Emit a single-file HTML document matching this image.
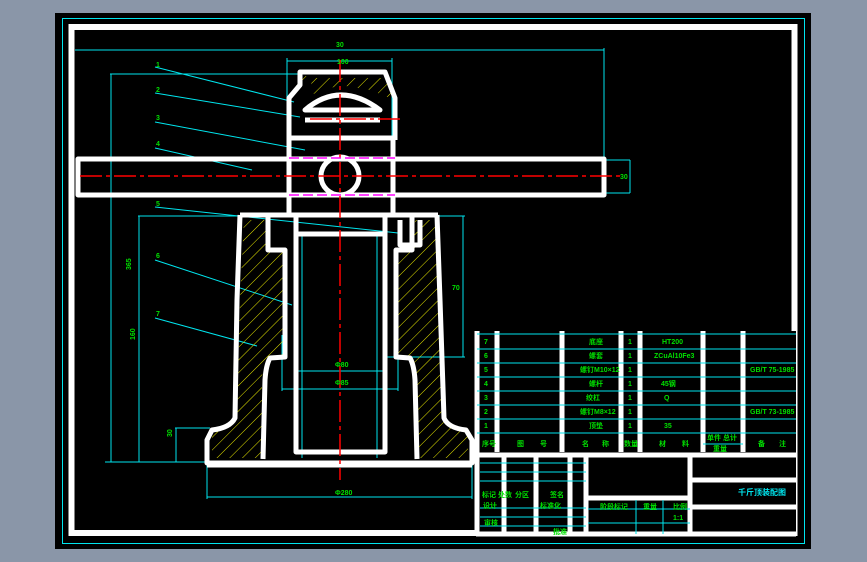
<!DOCTYPE html>
<html><head><meta charset="utf-8"><style>
html,body{margin:0;padding:0;background:#8a96a8;width:867px;height:562px;overflow:hidden}
svg{display:block}
text{font-family:"Liberation Sans","Noto Sans CJK SC",sans-serif;font-weight:bold}
</style></head><body>
<svg width="867" height="562" viewBox="0 0 867 562" xmlns="http://www.w3.org/2000/svg">
<defs>
<pattern id="h" width="9" height="9" patternUnits="userSpaceOnUse" patternTransform="rotate(45)">
<line x1="0" y1="0" x2="0" y2="9" stroke="#e8e800" stroke-width="1"/>
</pattern>
</defs>
<rect x="55" y="13" width="756" height="536" fill="#000"/>
<rect x="62.5" y="18.5" width="742" height="525" fill="none" stroke="#00e5ee" stroke-width="1"/>
<rect x="71.5" y="27" width="723" height="506" fill="none" stroke="#fff" stroke-width="6"/>

<!-- dimension lines -->
<g stroke="#00e5ee" stroke-width="1" fill="none">
<line x1="75" y1="50" x2="604" y2="50"/><line x1="604" y1="48" x2="604" y2="160"/>
<line x1="287" y1="61" x2="392" y2="61"/><line x1="287" y1="58" x2="287" y2="140"/><line x1="392" y1="58" x2="392" y2="140"/>
<line x1="110" y1="74" x2="300" y2="74"/><line x1="111" y1="74" x2="111" y2="462"/>
<line x1="105" y1="462" x2="205" y2="462"/>
<line x1="138" y1="216" x2="240" y2="216"/><line x1="139" y1="216" x2="139" y2="462"/>
<line x1="175" y1="428" x2="210" y2="428"/><line x1="176" y1="428" x2="176" y2="462"/>
<line x1="207" y1="465" x2="207" y2="499"/><line x1="472" y1="465" x2="472" y2="499"/><line x1="207" y1="497" x2="472" y2="497"/>
<line x1="340" y1="216" x2="465" y2="216"/><line x1="463" y1="216" x2="463" y2="357"/><line x1="384" y1="357" x2="465" y2="357"/>
<line x1="295" y1="371" x2="385" y2="371"/><line x1="282" y1="389" x2="398" y2="389"/>
<line x1="282" y1="335" x2="282" y2="391"/><line x1="398" y1="335" x2="398" y2="391"/>
<line x1="302" y1="233" x2="302" y2="458"/><line x1="377" y1="233" x2="377" y2="458"/>
<line x1="506" y1="160" x2="630" y2="160"/><line x1="506" y1="193" x2="630" y2="193"/><line x1="630" y1="160" x2="630" y2="193"/>
<line x1="155" y1="67" x2="294" y2="102"/>
<line x1="155" y1="93" x2="300" y2="117"/>
<line x1="155" y1="122" x2="305" y2="150"/>
<line x1="155" y1="148" x2="252" y2="170"/>
<line x1="155" y1="207" x2="398" y2="233"/>
<line x1="155" y1="260" x2="292" y2="305"/>
<line x1="155" y1="318" x2="257" y2="346"/>
</g>

<!-- hatching -->
<g fill="url(#h)">
<path d="M296 98 L312 80 L300 72 L296 80 Z"/>
<path d="M312 78 L388 78 L395 100 L370 90 L340 85 L310 95 Z"/>
<path d="M244 220 L268 220 L268 250 L287 250 L287 355 L270 360 L262 375 L262 458 L212 458 L212 432 L237 420 L240 300 Z"/>
<path d="M395 250 L412 250 L415 220 L437 220 L442 300 L445 420 L468 432 L468 458 L417 458 L415 375 L410 360 L395 355 Z"/>
</g>

<!-- white geometry -->
<g stroke="#fff" stroke-width="5" fill="none" stroke-linejoin="round">
<path d="M289 140 L289 98 L300 85 L300 72 L385 72 L390 85 L395 98 L395 140"/>
<path d="M305 110 Q340 80 380 110 Z" />
<line x1="305" y1="120" x2="380" y2="120"/>
<line x1="289" y1="138" x2="395" y2="138"/>
<rect x="78" y="159" width="526" height="36"/>
<line x1="289" y1="140" x2="289" y2="215"/><line x1="393" y1="140" x2="393" y2="215"/>
<circle cx="340" cy="176" r="19"/>
<line x1="240" y1="215" x2="438" y2="215"/>
<path d="M240 215 L237 300 L235 418 Q230 428 212 430 L207 440 L207 463 L472 463 L472 440 L466 430 Q448 428 444 418 L440 300 L437 215"/>
<path d="M268 215 L268 250 L285 250 L285 357 L270 358 Q266 365 265 380 L263 459"/>
<path d="M412 215 L412 250 L396 250 L396 357 L410 358 Q414 365 415 380 L417 459"/>
<rect x="296" y="234" width="89" height="218"/>
<line x1="296" y1="215" x2="296" y2="234"/><line x1="385" y1="215" x2="385" y2="234"/>
<path d="M400 220 L400 245 L420 245 L420 220"/>
</g>
<g stroke="#fff" stroke-width="3" fill="none">
<line x1="207" y1="466" x2="472" y2="466"/>
</g>

<!-- center lines -->
<g stroke="#f00" stroke-width="1.5" stroke-dasharray="22 4 4 4" fill="none">
<line x1="80" y1="176" x2="620" y2="176"/>
<line x1="340" y1="60" x2="340" y2="480"/>
<line x1="310" y1="119" x2="400" y2="119"/>
</g>
<g stroke="#f0f" stroke-width="1.5" stroke-dasharray="10 4" fill="none">
<line x1="289" y1="158" x2="395" y2="158"/><line x1="289" y1="195" x2="395" y2="195"/>
</g>

<!-- dim labels -->
<g fill="#00e000" font-size="7">
<text x="336" y="47">30</text><text x="337" y="64">100</text>
<text x="156" y="67">1</text><text x="156" y="92">2</text><text x="156" y="120">3</text><text x="156" y="146">4</text>
<text x="156" y="206">5</text><text x="156" y="258">6</text><text x="156" y="316">7</text>
<text x="620" y="179">30</text><text x="452" y="290">70</text>
<text x="335" y="367">Φ80</text><text x="335" y="385">Φ85</text><text x="335" y="495">Φ280</text>
<text x="131" y="270" transform="rotate(-90 131 270)">365</text>
<text x="135" y="340" transform="rotate(-90 135 340)">160</text>
<text x="172" y="437" transform="rotate(-90 172 437)">30</text>
</g>

<!-- title block -->
<g>
<rect x="476" y="331" width="320" height="205" fill="#000"/>
<g stroke="#fff" stroke-width="5" fill="none">
<line x1="477" y1="331" x2="477" y2="535"/>
<line x1="497" y1="331" x2="497" y2="452"/>
<line x1="562" y1="331" x2="562" y2="452"/>
<line x1="621" y1="331" x2="621" y2="452"/>
<line x1="640" y1="331" x2="640" y2="452"/>
<line x1="703" y1="331" x2="703" y2="452"/>
<line x1="743" y1="331" x2="743" y2="452"/>
<line x1="476" y1="455" x2="796" y2="455"/>
<line x1="504" y1="455" x2="504" y2="535"/>
<line x1="536" y1="455" x2="536" y2="535"/>
<line x1="570" y1="455" x2="570" y2="535"/>
<line x1="586" y1="455" x2="586" y2="535"/>
<line x1="690" y1="455" x2="690" y2="535"/>
<line x1="586" y1="498" x2="690" y2="498"/>
<line x1="690" y1="480" x2="796" y2="480"/>
<line x1="690" y1="507" x2="796" y2="507"/>
<line x1="476" y1="534" x2="796" y2="534"/>
</g>
<g stroke="#00e5ee" stroke-width="1">
<line x1="477" y1="334" x2="796" y2="334"/>
<line x1="477" y1="349" x2="796" y2="349"/>
<line x1="477" y1="363" x2="796" y2="363"/>
<line x1="477" y1="377" x2="796" y2="377"/>
<line x1="477" y1="391" x2="796" y2="391"/>
<line x1="477" y1="405" x2="796" y2="405"/>
<line x1="477" y1="419" x2="796" y2="419"/>
<line x1="477" y1="433" x2="796" y2="433"/>
<line x1="703" y1="444" x2="743" y2="444"/>
<line x1="480" y1="463" x2="586" y2="463"/><line x1="480" y1="472" x2="586" y2="472"/><line x1="480" y1="481" x2="586" y2="481"/>
<line x1="480" y1="508" x2="586" y2="508"/><line x1="480" y1="517" x2="586" y2="517"/><line x1="480" y1="526" x2="586" y2="526"/>
<line x1="588" y1="509" x2="690" y2="509"/><line x1="588" y1="523" x2="690" y2="523"/>
<line x1="636" y1="500" x2="636" y2="534"/><line x1="663" y1="500" x2="663" y2="534"/>
</g>
<g fill="#00e000" font-size="7">
<text x="484" y="344">7</text><text x="484" y="358">6</text><text x="484" y="372">5</text><text x="484" y="386">4</text><text x="484" y="400">3</text><text x="484" y="414">2</text><text x="484" y="428">1</text>
<text x="589" y="344">底座</text><text x="589" y="358">螺套</text><text x="580" y="372">螺钉M10×12</text>
<text x="589" y="386">螺杆</text><text x="586" y="400">绞杠</text><text x="580" y="414">螺钉M8×12</text><text x="589" y="428">顶垫</text>
<text x="628" y="344">1</text><text x="628" y="358">1</text><text x="628" y="372">1</text><text x="628" y="386">1</text><text x="628" y="400">1</text><text x="628" y="414">1</text><text x="628" y="428">1</text>
<text x="662" y="344">HT200</text><text x="654" y="358">ZCuAl10Fe3</text><text x="661" y="386">45钢</text><text x="664" y="400">Q</text><text x="664" y="428">35</text>
<text x="750" y="372">GB/T 75-1985</text><text x="750" y="414">GB/T 73-1985</text>
<text x="482" y="446">序号</text><text x="517" y="446">图</text><text x="540" y="446">号</text><text x="582" y="446">名</text><text x="602" y="446">称</text>
<text x="624" y="446">数量</text><text x="659" y="446">材</text><text x="682" y="446">料</text>
<text x="707" y="440">单件 总计</text><text x="713" y="451">重量</text><text x="758" y="446">备</text><text x="779" y="446">注</text>
<text x="482" y="497">标记 处数</text><text x="515" y="497">分区</text><text x="550" y="497">签名</text>
<text x="483" y="508">设计</text><text x="484" y="525">审核</text><text x="540" y="508">标准化</text><text x="553" y="534">批准</text>
<text x="600" y="509">阶段标记</text><text x="643" y="509">重量</text><text x="673" y="509">比例</text><text x="673" y="520">1:1</text>
</g>
<text x="738" y="495" fill="#00e5ee" font-size="8">千斤顶装配图</text>
</g>
</svg>
</body></html>
